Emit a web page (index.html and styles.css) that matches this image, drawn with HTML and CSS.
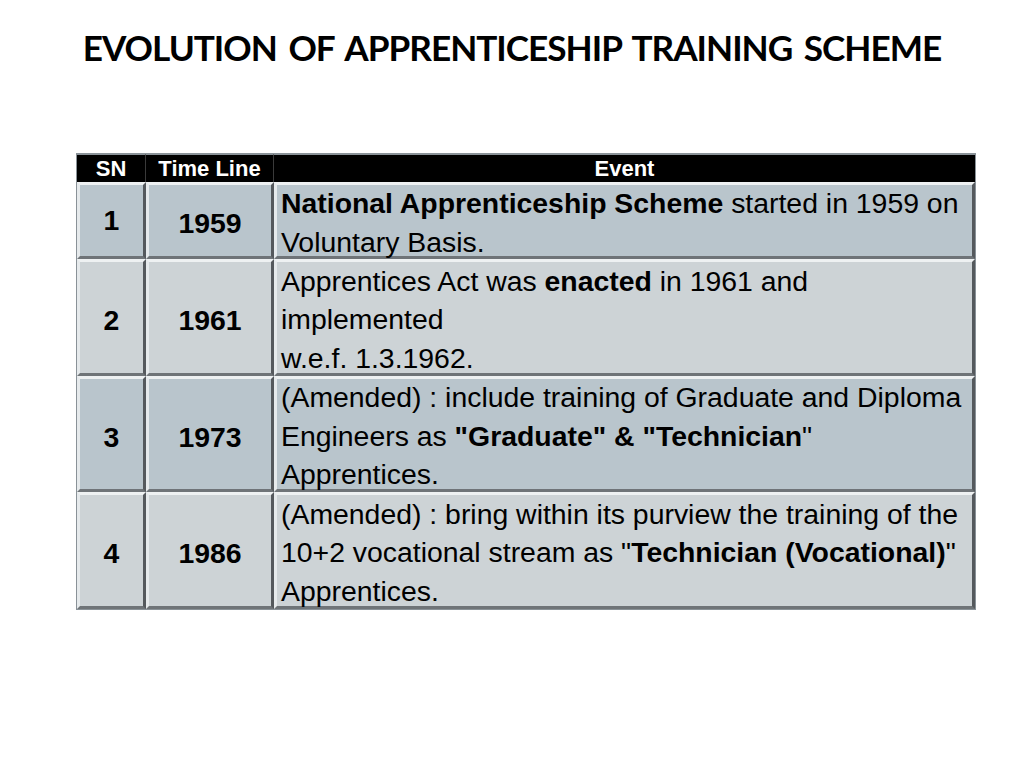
FILE: index.html
```html
<!DOCTYPE html>
<html>
<head>
<meta charset="utf-8">
<link rel="stylesheet" href="styles.css">
</head>
<body>
<h1 class="title">EVOLUTION OF APPRENTICESHIP TRAINING SCHEME</h1>
<div class="wrap">
<table class="grid">
  <colgroup>
    <col class="c-sn"><col class="c-time"><col class="c-event">
  </colgroup>
  <thead>
    <tr><th>SN</th><th>Time Line</th><th>Event</th></tr>
  </thead>
  <tbody>
    <tr class="r1 short">
      <td class="num"><span class="up">1</span></td>
      <td class="num">1959</td>
      <td class="ev"><div class="txt"><b>National Apprenticeship Scheme</b> started in 1959 on<br>Voluntary Basis.</div></td>
    </tr>
    <tr class="r2">
      <td class="num">2</td>
      <td class="num">1961</td>
      <td class="ev"><div class="txt">Apprentices Act was <b>enacted</b> in 1961 and<br>implemented<br>w.e.f. 1.3.1962.</div></td>
    </tr>
    <tr class="r1">
      <td class="num">3</td>
      <td class="num">1973</td>
      <td class="ev"><div class="txt">(Amended) : include training of Graduate and Diploma<br>Engineers as <b>"Graduate" &amp; "Technician</b>"<br>Apprentices.</div></td>
    </tr>
    <tr class="r2">
      <td class="num">4</td>
      <td class="num">1986</td>
      <td class="ev"><div class="txt">(Amended) : bring within its purview the training of the<br>10+2 vocational stream as "<b>Technician (Vocational)</b>"<br>Apprentices.</div></td>
    </tr>
  </tbody>
</table>
</div>
</body>
</html>
```
FILE: styles.css
```css
html, body {
  margin: 0;
  padding: 0;
  background: #ffffff;
}
.title {
  margin: 0;
  padding-top: 27px;
  height: 125px;
  box-sizing: border-box;
  text-align: center;
  font-family: "Lato", "Open Sans", sans-serif;
  font-weight: 700;
  font-size: 35.2px;
  letter-spacing: -1px;
  word-spacing: 4px;
  line-height: 40px;
  color: #000;
}
.wrap {
  padding-top: 28px;
  padding-left: 76px;
}
.grid {
  width: 898px;
  border-collapse: separate;
  border-spacing: 0;
  table-layout: fixed;
  font-family: "Liberation Sans", Arial, sans-serif;
  border: 1px solid #8a9298;
}
.c-sn { width: 69px; }
.c-time { width: 128px; }
.c-event { width: 701px; }
.grid th {
  background: #000;
  color: #fff;
  font-size: 22px;
  font-weight: 700;
  height: 27px;
  padding: 0;
  line-height: 27px;
  text-align: center;
  border-top: 1px solid #8a9298;
  border-right: 1px solid #3a3a3a;
}
.grid th:last-child { border-right: none; }
.grid td {
  font-size: 28.4px;
  line-height: 38.6px;
  color: #000;
  padding: 0;
  border-style: solid;
  border-width: 3px;
  border-color: #eef1f2 #55595d #6f7478 #e6eaec;
  vertical-align: middle;
}
.r1 td { background: #b9c5cc; }
.r2 td { background: #cdd3d6; }
.grid td.num {
  text-align: center;
  font-weight: 700;
  padding-top: 6px;
}
.grid td.ev {
  padding-left: 4px;
  white-space: nowrap;
  height: 110.5px;
}
.grid tr.short td.ev { height: 71px; }
.txt {
  margin: -1px 0 -5px;
}
.up {
  position: relative;
  top: -3px;
}
```
